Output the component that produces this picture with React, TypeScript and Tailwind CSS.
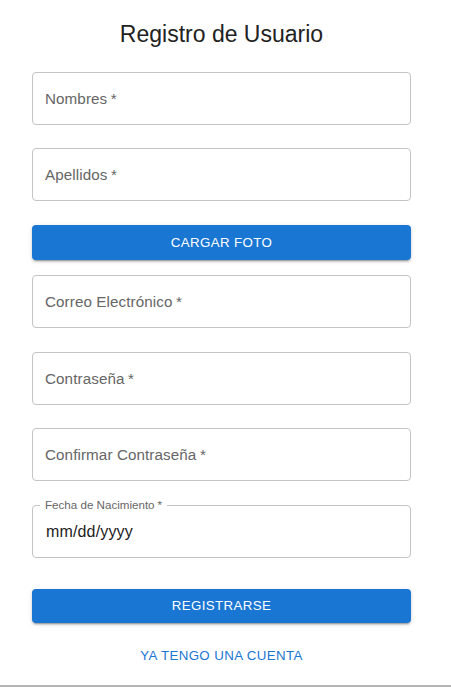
import React from "react";

const font = { fontFamily: '"Liberation Sans", Arial, sans-serif' };

function Field({ label }: { label: string }) {
  return (
    <div className="h-[53px] w-full rounded-[4px] border border-[#c4c4c4] flex items-center px-[12px]">
      <span className="text-[15.2px] tracking-[0.1px] text-[#666666] leading-none">
        {label}
        <span className="ml-[3.5px]">*</span>
      </span>
    </div>
  );
}

function Btn({ children, cls }: { children: React.ReactNode; cls: string }) {
  return (
    <button
      className={
        "w-full rounded-[4px] bg-[#1976d2] text-white text-[13.3px] tracking-[0.38px] uppercase flex items-center justify-center shadow-[0_3px_1px_-2px_rgba(0,0,0,0.2),0_2px_2px_0_rgba(0,0,0,0.14),0_1px_5px_0_rgba(0,0,0,0.12)] " +
        cls
      }
    >
      {children}
    </button>
  );
}

export default function App() {
  return (
    <div
      className="w-[451px] h-[687px] bg-white border-b-2 border-[#b4b4b4] box-border overflow-hidden"
      style={font}
    >
      <div className="ml-[32px] w-[379px] flex flex-col">
        <h1 className="pt-[19px] text-center text-[23px] leading-[31px] text-[#222222]">
          Registro de Usuario
        </h1>
        <div className="mt-[22px]">
          <Field label="Nombres" />
        </div>
        <div className="mt-[23px]">
          <Field label="Apellidos" />
        </div>
        <div className="mt-[24px]">
          <Btn cls="h-[35px]">Cargar foto</Btn>
        </div>
        <div className="mt-[15px]">
          <Field label="Correo Electrónico" />
        </div>
        <div className="mt-[24px]">
          <Field label="Contraseña" />
        </div>
        <div className="mt-[23px]">
          <Field label="Confirmar Contraseña" />
        </div>
        <div className="mt-[24px] relative">
          <div className="h-[53px] w-full rounded-[4px] border border-[#c4c4c4] flex items-center px-[13px]">
            <span className="text-[16px] tracking-[0.15px] text-[#222222] leading-none">mm/dd/yyyy</span>
          </div>
          <span className="absolute left-[8px] top-[-7px] bg-white px-[5px] text-[11.6px] leading-[14px] text-[#666666]">
            Fecha de Nacimiento<span className="ml-[3px]">*</span>
          </span>
        </div>
        <div className="mt-[31px]">
          <Btn cls="h-[34px]">Registrarse</Btn>
        </div>
        <div className="mt-[23px] h-[20px] flex items-center justify-center text-[13.3px] tracking-[0.38px] text-[#1976d2] uppercase">
          Ya tengo una cuenta
        </div>
      </div>
    </div>
  );
}
